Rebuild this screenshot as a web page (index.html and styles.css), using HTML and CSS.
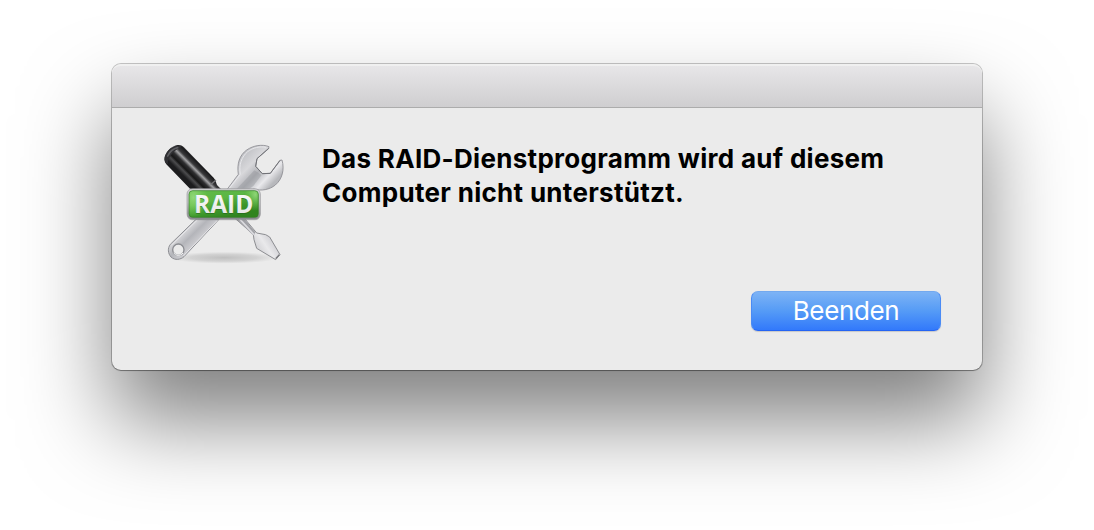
FILE: index.html
```html
<!DOCTYPE html>
<html lang="de">
<head>
  <meta charset="UTF-8">
  <title>RAID-Dienstprogramm</title>
  <link rel="stylesheet" href="styles.css">
</head>
<body>

<div class="dialog">
  <div class="titlebar"></div>
  <div class="content">
    <svg class="icon" viewBox="0 0 420 420">
      <defs>
        <linearGradient id="handle" gradientUnits="userSpaceOnUse" x1="88" y1="125" x2="142" y2="71">
          <stop offset="0" stop-color="#1c1c1e"/>
          <stop offset=".14" stop-color="#4c4c4e"/>
          <stop offset=".24" stop-color="#161616"/>
          <stop offset=".38" stop-color="#2f2f31"/>
          <stop offset=".5" stop-color="#a4a4a6"/>
          <stop offset=".6" stop-color="#38383a"/>
          <stop offset=".76" stop-color="#1a1a1c"/>
          <stop offset=".86" stop-color="#6c6c6e"/>
          <stop offset="1" stop-color="#1c1c1e"/>
        </linearGradient>
        <linearGradient id="wrench" gradientUnits="userSpaceOnUse" x1="265" y1="65" x2="355" y2="150">
          <stop offset="0" stop-color="#c2c3c7"/>
          <stop offset=".3" stop-color="#d8d8db"/>
          <stop offset=".55" stop-color="#b1b2b7"/>
          <stop offset=".8" stop-color="#e9e9ec"/>
          <stop offset="1" stop-color="#b7b8bc"/>
        </linearGradient>
        <linearGradient id="arm" gradientUnits="userSpaceOnUse" x1="100" y1="285" x2="132" y2="318">
          <stop offset="0" stop-color="#d5d5d8"/>
          <stop offset=".5" stop-color="#b4b5ba"/>
          <stop offset="1" stop-color="#cacace"/>
        </linearGradient>
        <linearGradient id="blade" gradientUnits="userSpaceOnUse" x1="310" y1="345" x2="355" y2="315">
          <stop offset="0" stop-color="#d3d3d6"/>
          <stop offset=".5" stop-color="#e9e9eb"/>
          <stop offset="1" stop-color="#d0d0d4"/>
        </linearGradient>
        <linearGradient id="frame" x1="0" y1="0" x2="0" y2="1">
          <stop offset="0" stop-color="#d0d0d3"/>
          <stop offset=".45" stop-color="#c5c5c9"/>
          <stop offset="1" stop-color="#858689"/>
        </linearGradient>
        <linearGradient id="plate" gradientUnits="userSpaceOnUse" x1="195" y1="168" x2="215" y2="252">
          <stop offset="0" stop-color="#5fb947"/>
          <stop offset=".3" stop-color="#5cb645"/>
          <stop offset=".7" stop-color="#3c962a"/>
          <stop offset="1" stop-color="#31841f"/>
        </linearGradient>
        <radialGradient id="glow">
          <stop offset="0" stop-color="#a2e289" stop-opacity=".75"/>
          <stop offset="1" stop-color="#8bdb66" stop-opacity="0"/>
        </radialGradient>
        <linearGradient id="letters" x1="0" y1="0" x2="0" y2="1">
          <stop offset="0" stop-color="#fff"/>
          <stop offset="1" stop-color="#e2e4e2"/>
        </linearGradient>
        <radialGradient id="floor">
          <stop offset="0" stop-color="#777" stop-opacity=".38"/>
          <stop offset=".6" stop-color="#888" stop-opacity=".25"/>
          <stop offset="1" stop-color="#999" stop-opacity="0"/>
        </radialGradient>
        <clipPath id="plate-clip">
          <rect x="105" y="170" width="208" height="80" rx="11"/>
        </clipPath>
      </defs>

      <ellipse cx="210" cy="371" rx="165" ry="18" fill="url(#floor)"/>

      <!-- screwdriver shaft and tip -->
      <path d="M244 254l28 0 36 43 27 5 12 7 31 53-13 15-57-34-8-26-2-16z" fill="url(#blade)" stroke="#8c8d91" stroke-width="3" stroke-linejoin="round"/>
      <path d="M246 254l25 0 33 41-5 10z" fill="#a0a1a6"/>
      <path d="M256 254l44 48" stroke="#dadade" stroke-width="5"/>
      <path d="M365 374l11-12" stroke="#77787c" stroke-width="4"/>

      <!-- wrench -->
      <path d="M126 256L49 331c-9 12-7 28 2 38 12 11 29 8 39-1L195 256z" fill="url(#arm)" stroke="#8d8e93" stroke-width="3"/>
      <path d="M130 258L53 333M190 259L88 366" fill="none" stroke="#e6e6e9" stroke-width="3"/>
      <circle cx="73" cy="347" r="17" fill="#ebebeb" stroke="#8b8c91" stroke-width="4"/>
      <path d="M59 357a17 17 0 0 0 28 0" fill="none" stroke="#fafafa" stroke-width="3"/>
      <path d="M218 168l35-47c-5-32 4-58 25-73 20-14 47-18 67-10l-1 6-35 30-4 23 20 22 24-1 29-39 6-1c8 29 1 57-20 75-17 14-42 19-66 12l-7 7z" fill="url(#wrench)" stroke="#8b8c91" stroke-width="2.5" stroke-linejoin="round"/>
      <path d="M222 168l37-47c-5-29 4-53 22-68 15-12 38-17 55-13" fill="none" stroke="#e8e8eb" stroke-width="3"/>
      <path d="M245 168l56-59 22 14-25 33-17 12z" fill="#8f9096" opacity=".4"/>
      <path d="M344 43l-35 31-4 23 20 22 24-1 29-39" fill="none" stroke="#717277" stroke-width="3"/>

      <!-- screwdriver handle -->
      <path d="M108 164L37 91c-7-8-8-18-2-30 6-13 20-26 35-28 8-1 14 1 20 7l89 91c8 9 7 19 12 24l12 12-7 7z" fill="url(#handle)"/>
      <path d="M36 88c-7-12-4-25 6-37 12-14 29-19 42-13-11 4-23 12-31 23-7 9-12 18-12 30z" fill="#303033"/>
      <path d="M41 66c6-13 17-22 30-25" fill="none" stroke="#5e5e61" stroke-width="5" stroke-linecap="round"/>
      <path d="M170 152l16-14" stroke="#777779" stroke-width="4"/>

      <!-- badge -->
      <rect x="99" y="166" width="220" height="93" rx="16" fill="#555" opacity=".3"/>
      <rect x="99" y="164" width="220" height="92" rx="16" fill="url(#frame)" stroke="#9b9c9e" stroke-width="2"/>
      <rect x="105" y="170" width="208" height="80" rx="11" fill="url(#plate)"/>
      <g clip-path="url(#plate-clip)">
        <ellipse cx="118" cy="190" rx="42" ry="60" fill="url(#glow)"/>
        <ellipse cx="304" cy="182" rx="32" ry="48" fill="url(#glow)"/>
      </g>
      <rect x="105" y="170" width="208" height="80" rx="11" fill="none" stroke="#347d25" stroke-width="2"/>
      <text class="badge-shadow" x="120" y="240" textLength="178" lengthAdjust="spacingAndGlyphs">RAID</text>
      <text class="badge-text" x="120" y="237" textLength="178" lengthAdjust="spacingAndGlyphs" fill="url(#letters)">RAID</text>
    </svg>
    <div class="main">
      <p class="message">Das RAID-Dienstprogramm wird auf diesem<br>Computer nicht unterstützt.</p>
      <button class="quit">Beenden</button>
    </div>
  </div>
</div>

</body>
</html>
```
FILE: styles.css
```css
body {
  margin: 0;
  padding-top: 64px;
  height: 466px;
  overflow: hidden;
  background: #fff;
  font-family: Inter, "Liberation Sans", sans-serif;
}
.dialog {
  width: 870px;
  height: 306px;
  margin-left: 112px;
  border-radius: 9px;
  background: #ebebeb;
  box-shadow: 0 0 0 1px rgba(0, 0, 0, 0.22), 0 1px 1px rgba(0, 0, 0, 0.25), 0 50px 88px rgba(0, 0, 0, 0.5);
}
.titlebar {
  box-sizing: border-box;
  height: 44px;
  border-top: 2px solid #f0f0f0;
  border-bottom: 1px solid #acacac;
  border-radius: 9px 9px 0 0;
  background: linear-gradient(#e7e6e8, #cfced0);
}
.content {
  display: flex;
  padding: 26px 41px 0 42px;
}
.icon {
  flex: none;
  width: 140px;
  height: 140px;
}
.badge-text, .badge-shadow {
  font-family: "Open Sans", sans-serif;
  font-size: 76px;
  font-weight: bold;
}
.badge-shadow {
  fill: #24651a;
  opacity: 0.6;
}
.main {
  flex: 1;
  display: flex;
  flex-direction: column;
  align-items: flex-end;
  padding-left: 28px;
}
.message {
  align-self: flex-start;
  margin: 8px 0 81px;
  font-size: 26px;
  font-weight: bold;
  line-height: 34px;
  letter-spacing: 0.3px;
  white-space: nowrap;
  color: #000;
}
.quit {
  width: 190px;
  height: 40px;
  padding: 0;
  border: 1px solid;
  border-color: #73a9ef #4a8bf5 #2464f3;
  border-radius: 7px;
  background: linear-gradient(#7db3f5, #559bf6 50%, #3279fb);
  box-shadow: 0 1px 1px rgba(0, 0, 0, 0.15);
  font-family: inherit;
  font-size: 26px;
  line-height: 38px;
  letter-spacing: -0.35px;
  color: #fff;
}
```
